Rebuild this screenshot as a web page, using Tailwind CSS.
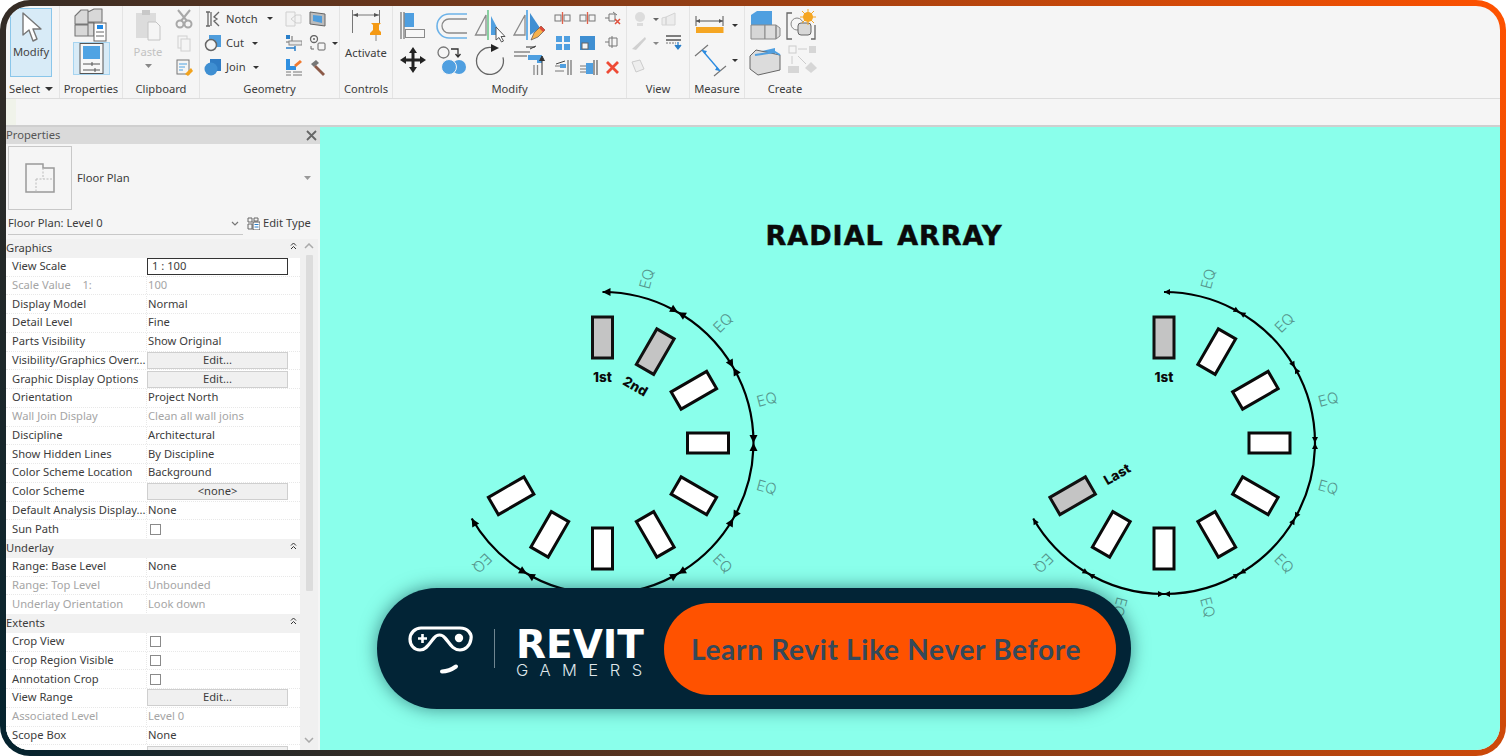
<!DOCTYPE html>
<html><head><meta charset="utf-8"><script src="https://cdn.jsdelivr.net/npm/@tailwindcss/browser@4"></script></head>
<body class="bg-white">
<div class="w-[1506px] h-[756px] rounded-[30px] p-[6px] bg-[linear-gradient(64deg,#03232f,#ff5200)] overflow-hidden">
<div class="w-full h-full rounded-[24px] overflow-hidden bg-[#f5f5f5] flex flex-col whitespace-nowrap font-['Noto_Sans',sans-serif] text-[11.2px] text-[#3c3c3c]">

<!-- ribbon -->
<div class="h-[93px] shrink-0 flex border-b border-[#dcdcdc]">
  <!-- Select -->
  <div class="w-[54px] flex flex-col border-r border-[#e4e4e4]">
    <div class="h-[75px] pt-[2px] pl-[4px]">
      <div class="relative w-[42px] h-[69px] bg-[#d8ebf7] border border-[#8ac6ea] flex justify-center">
        <svg class="absolute left-[10px] top-[3px]" width="22" height="32" viewBox="0 0 22 32"><path d="M2 1 L2 23 L8 18 L12 29 L16 27 L12 17 L20 17 Z" fill="#fff" stroke="#777" stroke-width="1.4" stroke-linejoin="round"/></svg>
        <span class="mt-[35px] text-[#444]">Modify</span>
      </div>
    </div>
    <div class="h-[16px] flex items-center pl-[3px] gap-[5px]"><span>Select</span><svg width="8" height="4" viewBox="0 0 8 4"><path d="M0 0H8L4 4Z" fill="#333"/></svg></div>
  </div>
  <!-- Properties -->
  <div class="w-[63px] flex flex-col border-r border-[#e4e4e4]">
    <div class="h-[75px] flex flex-col items-center">
      <svg class="mt-[2px]" width="36" height="34" viewBox="73 8 36 34"><path d="M75 16L81 10H88V24H75ZM88 12L94 9H102V22H88ZM75 25H88V36H75ZM88 23H94V36H88Z" fill="#d8d8d8" stroke="#777" stroke-width="1.100" stroke-linejoin="round"/><rect x="94" y="23" width="12" height="18" fill="#fff" stroke="#666"/><rect x="97" y="25" width="6" height="4" fill="#1e88e5"/><path d="M96 32h8M96 36h8" stroke="#666"/></svg>
      <div class="w-[37px] h-[33px] bg-[#d8ebf7] border border-[#a6d4f0] flex justify-center">
        <svg width="25" height="31" viewBox="0 0 25 31"><rect x="1" y="0.5" width="23" height="30" fill="#f7f7f7" stroke="#555"/><rect x="4" y="3" width="17" height="13" fill="#4fa3e3"/><path d="M4 21h17M4 27h17" stroke="#555"/><path d="M13 19v4M16 25v4" stroke="#555"/></svg>
      </div>
    </div>
    <div class="h-[16px] flex items-center justify-center">Properties</div>
  </div>
  <!-- Clipboard -->
  <div class="w-[77px] flex flex-col border-r border-[#e4e4e4]">
    <div class="h-[75px] flex">
      <div class="w-[50px] flex flex-col items-center pt-[3px]">
        <svg width="28" height="32" viewBox="133 9 28 32"><rect x="135" y="13" width="20" height="25" fill="#dcdcdc"/><rect x="141" y="10" width="8" height="5" fill="#c8c8c8"/><path d="M147 22h8l4 4v14h-12z" fill="#f5f5f5" stroke="#c4c4c4"/></svg>
        <span class="text-[#c2c2c2] mt-[3px] leading-[15px]">Paste</span>
        <svg class="mt-[5px]" width="7" height="4" viewBox="0 0 7 4"><path d="M0 0H7L3.500 4Z" fill="#888"/></svg>
      </div>
      <div class="flex flex-col items-center pt-[1px] gap-0 w-[22px]">
        <svg width="20" height="24" viewBox="174 7 20 24"><path d="M178 10 L187 21 M190 10 L181 21" stroke="#a8a8a8" stroke-width="2"/><circle cx="180" cy="24" r="3.500" fill="none" stroke="#a8a8a8" stroke-width="2"/><circle cx="188" cy="24" r="3.500" fill="none" stroke="#a8a8a8" stroke-width="2"/></svg>
        <svg width="20" height="24" viewBox="174 31 20 24"><rect x="178" y="36" width="9" height="12" fill="#f5f5f5" stroke="#d0d0d0"/><rect x="181" y="39" width="9" height="12" fill="#f5f5f5" stroke="#d0d0d0"/></svg>
        <svg width="20" height="24" viewBox="174 55 20 24"><rect x="177" y="60" width="12" height="14" fill="#f5f5f5" stroke="#777"/><path d="M179 64h8M179 67h6M179 70h4" stroke="#4fa3e3"/><path d="M185 74 L191 68 L193 71 L188 76Z" fill="#f2a31d"/></svg>
      </div>
    </div>
    <div class="h-[16px] flex items-center justify-center">Clipboard</div>
  </div>
  <!-- Geometry -->
  <div class="w-[140px] flex flex-col border-r border-[#e4e4e4]">
    <div class="h-[75px] pt-[1px] grid grid-cols-[81px_24px_24px] auto-rows-[24px] pl-[4px] items-center justify-items-start">
      <div class="flex items-center"><svg width="17" height="16" viewBox="0 0 17 16"><path d="M2 1h4M2 15h4M4 1v14M7 1v14M15 1L10 6l3 2-3 2 5 5" fill="none" stroke="#666" stroke-width="1.300"/></svg><span class="ml-[5px] w-[41px]">Notch</span><svg width="6" height="3" viewBox="0 0 6 3"><path d="M0 0H6L3 3Z" fill="#333"/></svg></div>
      <svg width="17" height="16" viewBox="0 0 17 16"><path d="M1 1h9v14H1z M6 8l5-4h5v8h-5z" fill="#f3f3f3" stroke="#cfcfcf"/></svg>
      <svg width="17" height="16" viewBox="0 0 17 16"><path d="M1 1l15 2v12L1 13z" fill="#bcbcbc" stroke="#666"/><path d="M4 4l9 1v7L4 10z" fill="#4f9ddc"/></svg>
      <div class="flex items-center"><svg width="17" height="17" viewBox="0 0 17 17"><rect x="5" y="0" width="12" height="12" fill="#4f9ddc"/><circle cx="7" cy="10" r="5.500" fill="#f5f5f5" stroke="#666" stroke-width="1.500"/></svg><span class="ml-[5px] w-[26px]">Cut</span><svg width="6" height="3" viewBox="0 0 6 3"><path d="M0 0H6L3 3Z" fill="#333"/></svg></div>
      <svg width="17" height="18" viewBox="0 0 17 18"><rect x="1" y="1" width="4" height="4" fill="#2a7fc9"/><path d="M7 2v5M1 8h16" stroke="#666"/><rect x="4" y="7" width="13" height="4" fill="#e8e8e8" stroke="#888"/><path d="M1 14h9M10 12v5" stroke="#2a7fc9" stroke-width="1.500"/></svg>
      <div class="flex items-center"><svg width="22" height="17" viewBox="0 0 22 17"><circle cx="5" cy="4" r="3.500" fill="none" stroke="#666" stroke-width="1.300"/><circle cx="5" cy="4" r="1" fill="#666"/><rect x="9" y="8" width="7" height="7" rx="1" fill="none" stroke="#666"/><path d="M2 11v3h3" stroke="#666" fill="none"/></svg><svg class="ml-[1px]" width="6" height="3" viewBox="0 0 6 3"><path d="M0 0H6L3 3Z" fill="#333"/></svg></div>
      <div class="flex items-center"><svg width="17" height="17" viewBox="0 0 17 17"><rect x="6" y="0" width="11" height="12" fill="#2f7cc4"/><circle cx="7" cy="10" r="6.500" fill="#3f8fd2"/></svg><span class="ml-[5px] w-[27px]">Join</span><svg width="6" height="3" viewBox="0 0 6 3"><path d="M0 0H6L3 3Z" fill="#333"/></svg></div>
      <svg width="17" height="17" viewBox="0 0 17 17"><path d="M1 0v11h10V7H5V0z" fill="#2f8fe0"/><path d="M1 13h5M1 16h5M8 13h9M8 16h9" stroke="#777"/><path d="M9 6l6-5 2 2-6 5z" fill="#f07a30"/></svg>
      <svg width="17" height="17" viewBox="0 0 17 17"><path d="M2 5l5-4 3 3-5 4z" fill="#777"/><path d="M7 6l9 9-2 2-9-9z" fill="#8c5a48"/></svg>
    </div>
    <div class="h-[16px] flex items-center justify-center">Geometry</div>
  </div>
  <!-- Controls -->
  <div class="w-[53px] flex flex-col border-r border-[#e4e4e4]">
    <div class="h-[75px] flex flex-col items-center pt-[3px]">
      <svg width="30" height="32" viewBox="349 9 30 32"><path d="M350.500 10v23M377.500 10v14M351 15h26" stroke="#777" fill="none"/><path d="M351 15l5-2v4zM377 15l-5-2v4z" fill="#555"/><path d="M369 23h10l-2 2v5l3 3v2h-12v-2l3-3v-5z" fill="#f59a14"/><path d="M374 35v6" stroke="#888"/></svg>
      <span class="mt-[4px] leading-[15px]">Activate</span>
    </div>
    <div class="h-[16px] flex items-center justify-center">Controls</div>
  </div>
  <!-- Modify -->
  <div class="w-[234px] flex flex-col border-r border-[#e4e4e4]">
    <div class="h-[75px] flex pl-[1px]">
      <div class="grid grid-cols-[39px_39px_39px_39px] grid-rows-[36px_36px] pt-[1px] w-[156px]">
        <svg width="39" height="36" viewBox="394 7 39 36"><rect x="404" y="13" width="10" height="14" fill="#4f9fe0"/><path d="M401 12v27M404 12v27" stroke="#8a8a8a" stroke-width="1.500"/><rect x="405.500" y="29.500" width="19" height="8" fill="#f7f7f7" stroke="#8a8a8a"/></svg>
        <svg width="39" height="36" viewBox="433 7 39 36"><path d="M467 14H449A12 12 0 0 0 449 38H467" fill="none" stroke="#6cb2e8" stroke-width="1.600"/><path d="M467 19H449A7 7 0 0 0 449 33H467" fill="none" stroke="#8a8a8a" stroke-width="1.300"/></svg>
        <svg width="39" height="36" viewBox="472 7 39 36"><path d="M475.500 35L486 15V35Z" fill="none" stroke="#8a8a8a" stroke-width="1.300"/><path d="M488 10V40" stroke="#88cfa0" stroke-width="2"/><path d="M491 16V35H501Z" fill="#4f9fe0"/><path d="M496 27V40L499 37.500L501.500 42L503.500 41L501 36.500H505Z" fill="#fff" stroke="#555"/></svg>
        <svg width="39" height="36" viewBox="511 7 39 36"><path d="M514 35L525 15V35Z" fill="none" stroke="#8a8a8a" stroke-width="1.300"/><path d="M527 10V40" stroke="#6cb2e8" stroke-width="2"/><path d="M530 13V35L540 28Z" fill="#3f8fd2"/><path d="M531 40L534 33L541 26L545 30L538 37Z" fill="#f5b04c" stroke="#555" stroke-width=".7"/><path d="M541 26L545 30L543 32L539 28Z" fill="#e04a3a"/></svg>
        <svg width="39" height="36" viewBox="394 43 39 36"><path d="M413 47L417 53H414.500V58.500H420V56L426 60L420 64V61.500H414.500V67H417L413 73L409 67H411.500V61.500H406V64L400 60L406 56V58.500H411.500V53H409Z" fill="#222"/></svg>
        <svg width="39" height="36" viewBox="433 43 39 36"><circle cx="443.500" cy="52.500" r="5.500" fill="none" stroke="#777" stroke-width="1.300"/><path d="M451 49H458V56M455.500 54L458 57L460.500 54" fill="none" stroke="#333" stroke-width="1.300"/><circle cx="459" cy="67" r="7" fill="#4f9fe0"/><circle cx="449" cy="67" r="7.500" fill="#4f9fe0" stroke="#f5f5f5"/></svg>
        <svg width="39" height="36" viewBox="472 43 39 36"><path d="M492 47.600A13.500 13.500 0 1 0 503 57.400" fill="none" stroke="#666" stroke-width="1.300"/><path d="M491 44L499 48L491 52Z" fill="#222"/></svg>
        <svg width="39" height="36" viewBox="511 43 39 36"><path d="M514 52H530M514 56H527" stroke="#888" stroke-width="1.300"/><path d="M530 49L536 46M526 47H535" stroke="#333"/><path d="M528 55H542V63H537V60H528Z" fill="#4f9fe0"/><path d="M534 65V75M537.500 65V75" stroke="#888" stroke-width="1.300"/><path d="M542 75V58M539.500 61L542 56L544.500 61" fill="#333" stroke="#333"/></svg>
      </div>
      <div class="grid grid-cols-[25px_25px_25px] grid-rows-[24px_24px_25px] pt-[1px]">
        <svg width="25" height="24" viewBox="549 7 25 24"><rect x="554" y="15" width="6" height="6" fill="none" stroke="#777"/><rect x="563" y="15" width="6" height="6" fill="none" stroke="#777"/><path d="M561.500 12V24" stroke="#e0604a" stroke-width="1.300"/></svg>
        <svg width="25" height="24" viewBox="574 7 25 24"><rect x="579" y="15" width="6" height="6" fill="none" stroke="#777"/><rect x="588" y="15" width="6" height="6" fill="none" stroke="#777"/><path d="M586.500 12V24" stroke="#e0604a" stroke-width="1.300"/></svg>
        <svg width="25" height="24" viewBox="599 7 25 24"><path d="M604 18H608M608 14H614V21H608ZM612 12L616 15" fill="none" stroke="#777"/><path d="M614 19L619 24M619 19L614 24" stroke="#e0503c" stroke-width="1.500"/></svg>
        <svg width="25" height="24" viewBox="549 31 25 24"><path d="M555 36H561V42H555ZM563 36H569V42H563ZM555 44H561V50H555ZM563 44H569V50H563Z" fill="#4f9fe0"/></svg>
        <svg width="25" height="24" viewBox="574 31 25 24"><path d="M579 36H594V50H579Z" fill="#3f8fd2"/><rect x="581" y="43" width="6" height="6" fill="#f5f5f5" stroke="#666"/></svg>
        <svg width="25" height="24" viewBox="599 31 25 24"><path d="M604 42H608M608 38H616V46H608Z" fill="none" stroke="#777"/><path d="M611 36V48" stroke="#777"/></svg>
        <svg width="25" height="25" viewBox="549 55 25 25"><path d="M554 66H563M554 71H563" stroke="#777"/><path d="M555 64L564 61" stroke="#444"/><rect x="559" y="64" width="6" height="4" fill="#4f9fe0"/><path d="M567 60V75M570 60V75" stroke="#777" stroke-width="1.300"/></svg>
        <svg width="25" height="25" viewBox="574 55 25 25"><path d="M579 66H586M579 69H586M579 72H586" stroke="#777"/><rect x="585" y="63" width="7" height="11" fill="#4f9fe0"/><path d="M593 60V75M596 60V75" stroke="#666" stroke-width="1.300"/></svg>
        <svg width="25" height="25" viewBox="599 55 25 25"><path d="M606 62L617 73M617 62L606 73" stroke="#ee4a35" stroke-width="2.800"/></svg>
      </div>
    </div>
    <div class="h-[16px] flex items-center justify-center">Modify</div>
  </div>
  <!-- View -->
  <div class="w-[63px] flex flex-col border-r border-[#e4e4e4]">
    <svg width="62" height="75" viewBox="627 6 62 75"><circle cx="640" cy="17" r="5" fill="#dcdcdc"/><rect x="637" y="23" width="6" height="3" fill="#dcdcdc"/><path d="M653 18h6l-3 3z" fill="#666"/><path d="M666 17l9-4v12l-9 0z M662 18l4-1v8h-4z" fill="#ececec" stroke="#d4d4d4"/><path d="M632 49L645 37L646 39L636 50Z" fill="#d0d0d0"/><path d="M653 42h6l-3 3z" fill="#888"/><path d="M666 36H681M666 40H681" stroke="#555" stroke-width="1.300"/><path d="M666 43H676" stroke="#777" stroke-dasharray="2 1"/><path d="M678 42V47M675 45L678 49L681 45" fill="#2a7fc9" stroke="#2a7fc9" stroke-width="1.300"/><path d="M632 62L640 60L644 69L636 72Z" fill="#eee" stroke="#ccc"/></svg>
    <div class="h-[16px] flex items-center justify-center">View</div>
  </div>
  <!-- Measure -->
  <div class="w-[55px] flex flex-col border-r border-[#e4e4e4]">
    <svg width="54" height="75" viewBox="690 6 54 75"><rect x="696" y="27" width="27.500" height="6" fill="#f5a623"/><path d="M696 16V26M723 16V26M696 21H723" stroke="#555"/><path d="M696 21l4-2v4zM723 21l-4-2v4z" fill="#555"/><path d="M732 24h6l-3 3z" fill="#333"/><path d="M695 56L708 45M714 76L726 66" stroke="#777" stroke-width="1.200"/><path d="M702 50L720 71" stroke="#2a8ae0" stroke-width="1.300"/><path d="M702 50l5 1-2 3zM720 71l-5-1 2-3z" fill="#2a8ae0"/><path d="M732 59h6l-3 3z" fill="#333"/></svg>
    <div class="h-[16px] flex items-center justify-center">Measure</div>
  </div>
  <!-- Create -->
  <div class="w-[80px] flex flex-col">
    <svg width="80" height="75" viewBox="745 6 80 75"><path d="M751 15L757 11H772V25H751Z" fill="#4f9fe0"/><path d="M751 25H765V39H751Z" fill="#d6d6d6" stroke="#888"/><path d="M765 25H776V39H765ZM776 25L780 28V36L776 39Z" fill="#dcdcdc" stroke="#888"/><path d="M792 13H787V39H792M811 39H815V25" fill="none" stroke="#666" stroke-width="1.300"/><circle cx="797" cy="24" r="6" fill="none" stroke="#888"/><rect x="798" y="23" width="13" height="12" rx="3" fill="#d8d8d8" stroke="#666"/><circle cx="808" cy="17" r="5" fill="#f5a623"/><path d="M808 9v16M800 17h16M802 11l12 12M814 11l-12 12" stroke="#f5a623"/><path d="M757 52L775 48V60L757 64Z" fill="#4f9fe0"/><path d="M750 56L756 50L780 55V70L758 75L750 69Z" fill="#dcdcdc" stroke="#666"/><path d="M755 55L775 52L780 55" fill="none" stroke="#4f9fe0" stroke-width="2"/><rect x="789" y="46" width="7" height="7" fill="none" stroke="#ccc"/><rect x="809" y="46" width="7" height="7" fill="#d6d6d6"/><path d="M798 49H807M792 56V64M798 56L806 64" stroke="#ccc"/><rect x="788" y="66" width="11" height="7" fill="#d6d6d6"/><path d="M811 62L817 68L811 73L805 68Z" fill="#d6d6d6"/></svg>
    <div class="h-[16px] flex items-center justify-center">Create</div>
  </div>
</div>

<!-- options bar -->
<div class="h-[26px] shrink-0 flex"><div class="w-[10px] bg-[#f0f3ea]"></div></div>
<div class="h-[2px] shrink-0 bg-[#cfcfcf]"></div>

<!-- main -->
<div class="flex-1 flex min-h-0">
  <!-- properties -->
  <div class="w-[314px] shrink-0 flex flex-col overflow-hidden bg-[#f5f5f5]">
    <div class="h-[17px] shrink-0 bg-[#dadada] flex items-center justify-between pr-[3px]"><span class="text-[#555]">Properties</span><svg width="11" height="11" viewBox="0 0 11 11"><path d="M1 1L10 10M10 1L1 10" stroke="#666" stroke-width="1.800"/></svg></div>
    <div class="h-[67px] shrink-0 flex items-center pl-[2px] pr-[9px]">
      <div class="w-[64px] h-[64px] border border-[#c8c8c8] flex items-center justify-center">
        <svg width="30" height="30" viewBox="0 0 30 30"><path d="M1 1H18V5H29V16H29V29H1Z" fill="none" stroke="#999" stroke-width="1.500"/><path d="M11 16H29M11 16V29M18 5V16" stroke="#bbb" stroke-dasharray="2 1.500"/></svg>
      </div>
      <span class="ml-[5px] flex-1 mt-[1px]">Floor Plan</span>
      <svg width="7" height="4" viewBox="0 0 7 4"><path d="M0 0H7L3.500 4Z" fill="#999"/></svg>
    </div>
    <div class="h-[24px] shrink-0 flex items-center pl-[2px] pt-[1px]">
      <div class="w-[235px] h-full flex items-center justify-between border-b border-[#c8c8c8] pr-[4px]"><span>Floor Plan: Level 0</span><svg width="8" height="5" viewBox="0 0 8 5"><path d="M1 1L4 4L7 1" fill="none" stroke="#777" stroke-width="1.200"/></svg></div>
      <svg class="ml-[4px]" width="13" height="13" viewBox="0 0 13 13"><path d="M1 1H5V5H1ZM7 1H11V4H7ZM1 7H5V12H1Z" fill="none" stroke="#666"/><rect x="6" y="5" width="7" height="8" fill="#fff" stroke="#555"/><path d="M7.500 7.500H11.500M7.500 10H11.500" stroke="#2a7fc9"/></svg>
      <span class="ml-[3px]">Edit Type</span>
    </div>
    <div class="h-[4px] shrink-0"></div>
    <div class="flex-1 flex min-h-0">
      <div class="w-[294px] shrink-0 bg-white">
        <div class="h-[18.75px] bg-[#f1f1f1] flex items-center justify-between pr-[3px]"><span>Graphics</span><svg class="mb-[5px]" width="7" height="8" viewBox="0 0 7 8"><path d="M1 3.500L3.500 1L6 3.500M1 7L3.500 4.500L6 7" fill="none" stroke="#333"/></svg></div>
        <div class="h-[18.75px] flex items-center border-b border-dotted border-[#e8e8e8]"><span class="w-[141px] pl-[6px] shrink-0">View Scale</span><div class="w-[141px] h-[17px] border border-[#333] pl-[4px] flex items-center">1 : 100</div></div>
        <div class="h-[18.75px] flex items-center border-b border-dotted border-[#e8e8e8] text-[#a5a5a5]"><span class="w-[141px] pl-[6px] shrink-0 border-r border-dotted border-[#e8e8e8]">Scale Value&nbsp;&nbsp;&nbsp;&nbsp;1:</span><span class="pl-[1px]">100</span></div>
        <div class="h-[18.75px] flex items-center border-b border-dotted border-[#e8e8e8]"><span class="w-[141px] pl-[6px] shrink-0 border-r border-dotted border-[#e8e8e8]">Display Model</span><span class="pl-[1px]">Normal</span></div>
        <div class="h-[18.75px] flex items-center border-b border-dotted border-[#e8e8e8]"><span class="w-[141px] pl-[6px] shrink-0 border-r border-dotted border-[#e8e8e8]">Detail Level</span><span class="pl-[1px]">Fine</span></div>
        <div class="h-[18.75px] flex items-center border-b border-dotted border-[#e8e8e8]"><span class="w-[141px] pl-[6px] shrink-0 border-r border-dotted border-[#e8e8e8]">Parts Visibility</span><span class="pl-[1px]">Show Original</span></div>
        <div class="h-[18.75px] flex items-center border-b border-dotted border-[#e8e8e8]"><span class="w-[141px] pl-[6px] shrink-0">Visibility/Graphics Overr...</span><div class="w-[141px] h-[17px] bg-[#f0f0f0] border border-[#cfcfcf] flex items-center justify-center">Edit...</div></div>
        <div class="h-[18.75px] flex items-center border-b border-dotted border-[#e8e8e8]"><span class="w-[141px] pl-[6px] shrink-0">Graphic Display Options</span><div class="w-[141px] h-[17px] bg-[#f0f0f0] border border-[#cfcfcf] flex items-center justify-center">Edit...</div></div>
        <div class="h-[18.75px] flex items-center border-b border-dotted border-[#e8e8e8]"><span class="w-[141px] pl-[6px] shrink-0 border-r border-dotted border-[#e8e8e8]">Orientation</span><span class="pl-[1px]">Project North</span></div>
        <div class="h-[18.75px] flex items-center border-b border-dotted border-[#e8e8e8] text-[#a5a5a5]"><span class="w-[141px] pl-[6px] shrink-0 border-r border-dotted border-[#e8e8e8]">Wall Join Display</span><span class="pl-[1px]">Clean all wall joins</span></div>
        <div class="h-[18.75px] flex items-center border-b border-dotted border-[#e8e8e8]"><span class="w-[141px] pl-[6px] shrink-0 border-r border-dotted border-[#e8e8e8]">Discipline</span><span class="pl-[1px]">Architectural</span></div>
        <div class="h-[18.75px] flex items-center border-b border-dotted border-[#e8e8e8]"><span class="w-[141px] pl-[6px] shrink-0 border-r border-dotted border-[#e8e8e8]">Show Hidden Lines</span><span class="pl-[1px]">By Discipline</span></div>
        <div class="h-[18.75px] flex items-center border-b border-dotted border-[#e8e8e8]"><span class="w-[141px] pl-[6px] shrink-0 border-r border-dotted border-[#e8e8e8]">Color Scheme Location</span><span class="pl-[1px]">Background</span></div>
        <div class="h-[18.75px] flex items-center border-b border-dotted border-[#e8e8e8]"><span class="w-[141px] pl-[6px] shrink-0">Color Scheme</span><div class="w-[141px] h-[17px] bg-[#f0f0f0] border border-[#cfcfcf] flex items-center justify-center">&lt;none&gt;</div></div>
        <div class="h-[18.75px] flex items-center border-b border-dotted border-[#e8e8e8]"><span class="w-[141px] pl-[6px] shrink-0 border-r border-dotted border-[#e8e8e8] overflow-hidden">Default Analysis Display...</span><span class="pl-[1px]">None</span></div>
        <div class="h-[18.75px] flex items-center"><span class="w-[141px] pl-[6px] shrink-0 border-r border-dotted border-[#e8e8e8]">Sun Path</span><span class="w-[11px] h-[11px] border border-[#8a8a8a] ml-[3px]"></span></div>
        <div class="h-[18.75px] bg-[#f1f1f1] flex items-center justify-between pr-[3px]"><span>Underlay</span><svg class="mb-[5px]" width="7" height="8" viewBox="0 0 7 8"><path d="M1 3.500L3.500 1L6 3.500M1 7L3.500 4.500L6 7" fill="none" stroke="#333"/></svg></div>
        <div class="h-[18.75px] flex items-center border-b border-dotted border-[#e8e8e8]"><span class="w-[141px] pl-[6px] shrink-0 border-r border-dotted border-[#e8e8e8]">Range: Base Level</span><span class="pl-[1px]">None</span></div>
        <div class="h-[18.75px] flex items-center border-b border-dotted border-[#e8e8e8] text-[#a5a5a5]"><span class="w-[141px] pl-[6px] shrink-0 border-r border-dotted border-[#e8e8e8]">Range: Top Level</span><span class="pl-[1px]">Unbounded</span></div>
        <div class="h-[18.75px] flex items-center text-[#a5a5a5]"><span class="w-[141px] pl-[6px] shrink-0 border-r border-dotted border-[#e8e8e8]">Underlay Orientation</span><span class="pl-[1px]">Look down</span></div>
        <div class="h-[18.75px] bg-[#f1f1f1] flex items-center justify-between pr-[3px]"><span>Extents</span><svg class="mb-[5px]" width="7" height="8" viewBox="0 0 7 8"><path d="M1 3.500L3.500 1L6 3.500M1 7L3.500 4.500L6 7" fill="none" stroke="#333"/></svg></div>
        <div class="h-[18.75px] flex items-center border-b border-dotted border-[#e8e8e8]"><span class="w-[141px] pl-[6px] shrink-0 border-r border-dotted border-[#e8e8e8]">Crop View</span><span class="w-[11px] h-[11px] border border-[#8a8a8a] ml-[3px]"></span></div>
        <div class="h-[18.75px] flex items-center border-b border-dotted border-[#e8e8e8]"><span class="w-[141px] pl-[6px] shrink-0 border-r border-dotted border-[#e8e8e8]">Crop Region Visible</span><span class="w-[11px] h-[11px] border border-[#8a8a8a] ml-[3px]"></span></div>
        <div class="h-[18.75px] flex items-center border-b border-dotted border-[#e8e8e8]"><span class="w-[141px] pl-[6px] shrink-0 border-r border-dotted border-[#e8e8e8]">Annotation Crop</span><span class="w-[11px] h-[11px] border border-[#8a8a8a] ml-[3px]"></span></div>
        <div class="h-[18.75px] flex items-center border-b border-dotted border-[#e8e8e8]"><span class="w-[141px] pl-[6px] shrink-0">View Range</span><div class="w-[141px] h-[17px] bg-[#f0f0f0] border border-[#cfcfcf] flex items-center justify-center">Edit...</div></div>
        <div class="h-[18.75px] flex items-center border-b border-dotted border-[#e8e8e8] text-[#a5a5a5]"><span class="w-[141px] pl-[6px] shrink-0 border-r border-dotted border-[#e8e8e8]">Associated Level</span><span class="pl-[1px]">Level 0</span></div>
        <div class="h-[18.75px] flex items-center border-b border-dotted border-[#e8e8e8]"><span class="w-[141px] pl-[6px] shrink-0 border-r border-dotted border-[#e8e8e8]">Scope Box</span><span class="pl-[1px]">None</span></div>
        <div class="h-[18.75px] flex items-center"><span class="w-[141px] pl-[6px] shrink-0">Depth Clipping</span><div class="w-[141px] h-[17px] bg-[#f0f0f0] border border-[#cfcfcf]"></div></div>
      </div>
      <div class="w-[18px] shrink-0 bg-[#f0f0f0] flex flex-col items-center">
        <svg class="mt-[4px]" width="10" height="6" viewBox="0 0 10 6"><path d="M1 5L5 1L9 5" fill="none" stroke="#aaa" stroke-width="1.500"/></svg>
        <div class="w-[7px] h-[336px] mt-[6px] bg-[#dcdcdc] rounded-[1px]"></div>
        <svg class="mt-[146px]" width="10" height="6" viewBox="0 0 10 6"><path d="M1 1L5 5L9 1" fill="none" stroke="#aaa" stroke-width="1.500"/></svg>
      </div>
    </div>
  </div>

  <!-- canvas -->
  <div class="relative flex-1 bg-[#8affeb] overflow-hidden">
    <svg class="absolute left-0 top-0" width="1180" height="623" viewBox="320 127 1180 623">
      <defs>
        <polygon id="cw" points="0,-151 -8,-155 -8,-147" fill="#000"/>
        <polygon id="ccw" points="0,-151 8,-155 8,-147" fill="#000"/>
        <polygon id="cws" points="0,-151 -6,-154 -6,-148" fill="#000"/>
        <polygon id="ccws" points="0,-151 6,-154 6,-148" fill="#000"/>
        <rect id="w" x="-10" y="-126" width="20" height="41" fill="#fff" stroke="#0a0a0a" stroke-width="3"/>
        <rect id="g" x="-10" y="-126" width="20" height="41" fill="#c4c4c4" stroke="#111" stroke-width="3"/>
        <path id="arc" d="M0 -151 A151 151 0 1 1 -130.800 75.500" fill="none" stroke="#000" stroke-width="2.200"/>
        <text id="eq" x="0" y="0" text-anchor="middle" font-size="15" font-weight="300" fill="#56968d" dominant-baseline="central">EQ</text>
      </defs>
      <text x="884" y="244.500" text-anchor="middle" class="font-['DejaVu_Sans',sans-serif]" font-size="27" font-weight="700" fill="#0a0a0a" word-spacing="3" letter-spacing="1" stroke="#0a0a0a" stroke-width=".5">RADIAL ARRAY</text>

      <g transform="translate(602.500 443)" class="font-['Inter',sans-serif]">
        <use href="#g"/><use href="#g" transform="rotate(30)"/><use href="#w" transform="rotate(60)"/><use href="#w" transform="rotate(90)"/><use href="#w" transform="rotate(120)"/><use href="#w" transform="rotate(150)"/><use href="#w" transform="rotate(180)"/><use href="#w" transform="rotate(210)"/><use href="#w" transform="rotate(240)"/>
        <use href="#arc"/>
        <use href="#ccw"/>
        <use href="#cw" transform="rotate(30)"/><use href="#ccw" transform="rotate(30)"/>
        <use href="#cw" transform="rotate(60)"/><use href="#ccw" transform="rotate(60)"/>
        <use href="#cw" transform="rotate(90)"/><use href="#ccw" transform="rotate(90)"/>
        <use href="#cw" transform="rotate(120)"/><use href="#ccw" transform="rotate(120)"/>
        <use href="#cw" transform="rotate(150)"/><use href="#ccw" transform="rotate(150)"/>
        <use href="#cw" transform="rotate(210)"/><use href="#ccw" transform="rotate(210)"/>
        <use href="#cw" transform="rotate(240)"/>
        <g transform="rotate(15) translate(0 -170) rotate(-90)"><use href="#eq"/></g>
        <g transform="rotate(45) translate(0 -170) rotate(-90)"><use href="#eq"/></g>
        <g transform="rotate(75) translate(0 -170) rotate(-90)"><use href="#eq"/></g>
        <g transform="rotate(105) translate(0 -170) rotate(-90)"><use href="#eq"/></g>
        <g transform="rotate(135) translate(0 -170) rotate(-90)"><use href="#eq"/></g>
        <g transform="rotate(225) translate(0 -170) rotate(-90)"><use href="#eq"/></g>
        <text x="0" y="-61.500" text-anchor="middle" font-size="13.500" font-weight="800" fill="#0a0a0a">1st</text>
        <text transform="translate(33 -57) rotate(30)" text-anchor="middle" font-size="13.500" font-weight="800" fill="#0a0a0a" dominant-baseline="central">2nd</text>
      </g>

      <g transform="translate(1164 443)" class="font-['Inter',sans-serif]">
        <use href="#g"/><use href="#w" transform="rotate(30)"/><use href="#w" transform="rotate(60)"/><use href="#w" transform="rotate(90)"/><use href="#w" transform="rotate(120)"/><use href="#w" transform="rotate(150)"/><use href="#w" transform="rotate(180)"/><use href="#w" transform="rotate(210)"/><use href="#g" transform="rotate(240)"/>
        <use href="#arc"/>
        <use href="#ccws"/>
        <use href="#cws" transform="rotate(30)"/><use href="#ccws" transform="rotate(30)"/>
        <use href="#cws" transform="rotate(60)"/><use href="#ccws" transform="rotate(60)"/>
        <use href="#cws" transform="rotate(90)"/><use href="#ccws" transform="rotate(90)"/>
        <use href="#cws" transform="rotate(120)"/><use href="#ccws" transform="rotate(120)"/>
        <use href="#cws" transform="rotate(150)"/><use href="#ccws" transform="rotate(150)"/>
        <use href="#cws" transform="rotate(180)"/><use href="#ccws" transform="rotate(180)"/>
        <use href="#cws" transform="rotate(210)"/><use href="#ccws" transform="rotate(210)"/>
        <use href="#cws" transform="rotate(240)"/>
        <g transform="rotate(15) translate(0 -170) rotate(-90)"><use href="#eq"/></g>
        <g transform="rotate(45) translate(0 -170) rotate(-90)"><use href="#eq"/></g>
        <g transform="rotate(75) translate(0 -170) rotate(-90)"><use href="#eq"/></g>
        <g transform="rotate(105) translate(0 -170) rotate(-90)"><use href="#eq"/></g>
        <g transform="rotate(135) translate(0 -170) rotate(-90)"><use href="#eq"/></g>
        <g transform="rotate(165) translate(0 -170) rotate(-90)"><use href="#eq"/></g>
        <g transform="rotate(195) translate(0 -170) rotate(-90)"><use href="#eq"/></g>
        <g transform="rotate(225) translate(0 -170) rotate(-90)"><use href="#eq"/></g>
        <text x="0" y="-61.500" text-anchor="middle" font-size="13.500" font-weight="800" fill="#0a0a0a">1st</text>
        <text transform="translate(-47 31) rotate(-30)" text-anchor="middle" font-size="13.500" font-weight="800" fill="#0a0a0a" dominant-baseline="central">Last</text>
      </g>
    </svg>
  </div>
</div>
</div>
</div>

<!-- banner -->
<div class="absolute left-[377px] top-[588px] w-[754px] h-[121px] rounded-[60px] bg-[#022436] shadow-[0_0_18px_rgba(0,50,60,0.55)] flex items-center pl-[31px]">
  <svg width="66" height="50" viewBox="408 626 66 50"><path d="M421 630H460C468 630 472 636 471 641C470 648 465 652 460 652C452 652 449 644 445 640C442 636 437 636 434 640C430 644 427 652 420 652C414 652 410 647 410 641C410 635 415 630 421 630Z" fill="none" stroke="#fff" stroke-width="3.200"/><path d="M418 640.500H427M422.500 636V645" stroke="#fff" stroke-width="2.600"/><circle cx="459" cy="640" r="4.200" fill="#fff"/><path d="M442 673.500C447 673.500 451 672 456 668.500" fill="none" stroke="#fff" stroke-width="4" stroke-linecap="round"/></svg>
  <div class="w-px h-[39px] bg-[#6f8691] ml-[20px]"></div>
  <div class="ml-[21px] mt-[11px] w-[129px] flex flex-col items-start text-white">
    <span class="text-[39px] leading-[30px] font-bold font-['DejaVu_Sans',sans-serif]">REVIT</span>
    <span class="text-[16.500px] leading-[16px] mt-[2px] font-light tracking-[11.500px] text-[#dfe6ea] font-['Inter',sans-serif]">GAMERS</span>
  </div>
  <div class="ml-[19px] w-[452px] h-[92px] pr-[8px] rounded-[46px] bg-[#ff5200] flex items-center justify-center font-['Lato',sans-serif] text-[28px] font-bold text-[#34495a] tracking-[0.7px]">Learn Revit Like Never Before</div>
</div>
</body></html>
